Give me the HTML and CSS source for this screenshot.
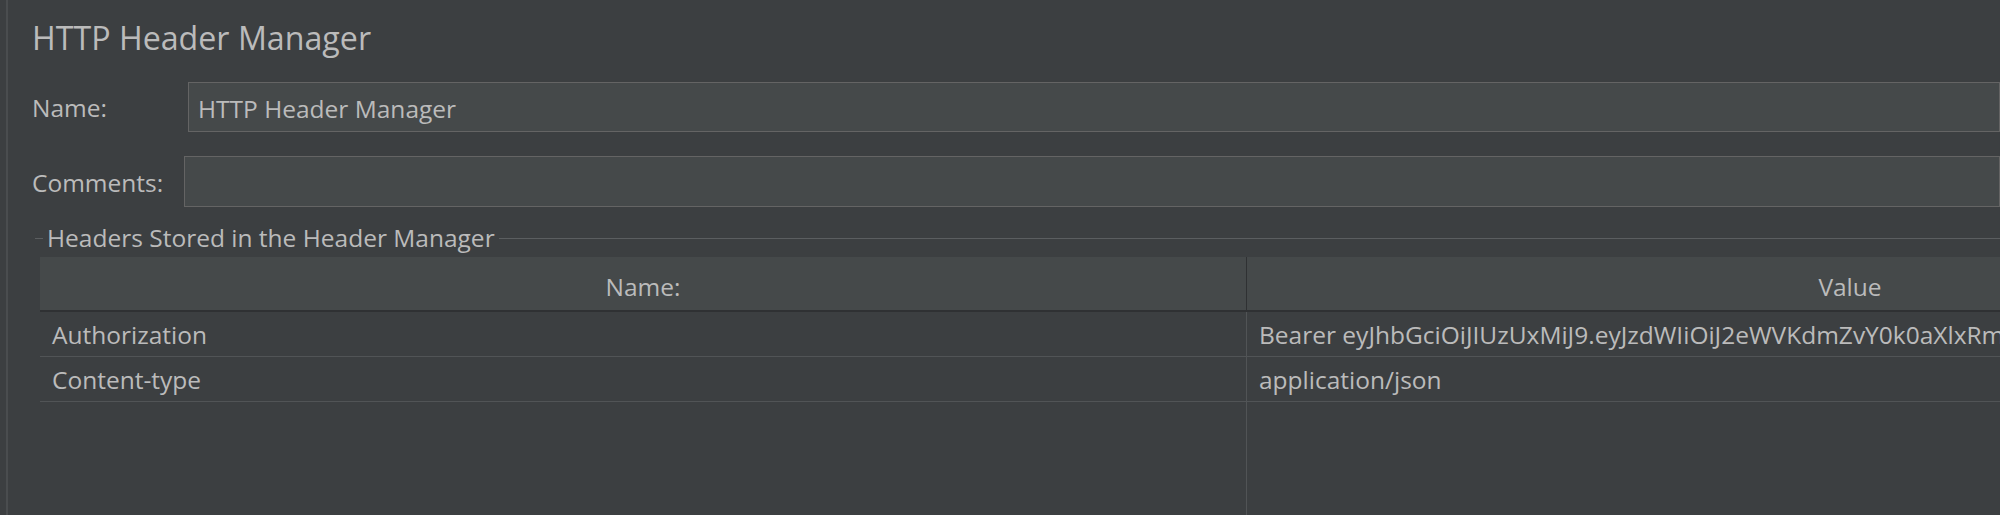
FILE: index.html
```html
<!DOCTYPE html>
<html lang="en">
<head>
<meta charset="utf-8">
<title>HTTP Header Manager</title>
<link rel="stylesheet" href="styles.css">
</head>
<body>
<div class="app">
  <div class="panel">
    <h1 class="title">HTTP Header Manager</h1>
    <div class="form-row">
      <label class="label label-name">Name:</label>
      <div class="field">HTTP Header Manager</div>
    </div>
    <div class="form-row">
      <label class="label label-comments">Comments:</label>
      <div class="field"></div>
    </div>
    <div class="group">
      <div class="legend"><span class="legend-text">Headers Stored in the Header Manager</span></div>
      <div class="table">
        <div class="row head">
          <div class="cell">Name:</div>
          <div class="cell">Value</div>
        </div>
        <div class="row">
          <div class="cell">Authorization</div>
          <div class="cell">Bearer eyJhbGciOiJIUzUxMiJ9.eyJzdWIiOiJ2eWVKdmZvY0k0aXlxRmRrUmFwTDVKd0lsRmJzM0F4ZTZ1aHBJVkpnSXNEYyIsImV4cCI6MTcwMDAwMDAwMH0</div>
        </div>
        <div class="row">
          <div class="cell">Content-type</div>
          <div class="cell">application/json</div>
        </div>
        <div class="row filler">
          <div class="cell"></div>
          <div class="cell"></div>
        </div>
      </div>
    </div>
  </div>
</div>
</body>
</html>
```

FILE: styles.css
```css
html, body {
  margin: 0;
  padding: 0;
  background: #3c3f41;
  overflow: hidden;
}

body {
  width: 2000px;
  height: 515px;
  font-family: "Open Sans", "Noto Sans", sans-serif;
  font-size: 24.5px;
  color: #bbbbbb;
}

.app {
  height: 515px;
  display: flex;
}

.panel {
  margin-left: 6px;
  border-left: 2px solid #4a4d4f;
  padding-left: 24px;
  flex: 1;
  min-width: 0;
  display: flex;
  flex-direction: column;
}

.title {
  margin: 18px 0 0 0;
  font-size: 32.2px;
  font-weight: normal;
  line-height: 40px;
  color: #bbbbbb;
}

.form-row {
  display: flex;
  align-items: center;
  margin-top: 24px;
  height: 50px;
}

.form-row + .form-row {
  height: 51px;
}

.label {
  flex: none;
  line-height: 30px;
  padding-top: 2px;
}

.label-name {
  width: 156px;
}

.label-comments {
  width: 152px;
}

.field {
  flex: 1;
  height: 100%;
  box-sizing: border-box;
  background: #45494a;
  border: 1px solid #646464;
  padding: 2px 9px 0;
  display: flex;
  align-items: center;
  white-space: nowrap;
  overflow: hidden;
}

.group {
  margin-left: 3px;
  margin-top: 16px;
  flex: 1;
  display: flex;
  flex-direction: column;
}

.legend {
  display: flex;
  align-items: center;
  line-height: 30px;
}

.legend::before {
  content: "";
  width: 8px;
  height: 1px;
  background: #5b5e60;
}

.legend::after {
  content: "";
  flex: 1;
  height: 1px;
  background: #5b5e60;
}

.legend-text {
  padding: 0 4px;
  white-space: nowrap;
}

.table {
  margin-top: 4px;
  margin-left: 5px;
  flex: 1;
  display: flex;
  flex-direction: column;
  width: 2413px;
}

.row {
  display: grid;
  grid-template-columns: 1207px 1206px;
  height: 45px;
  box-sizing: border-box;
  border-bottom: 1px solid #515456;
}

.row .cell {
  padding-left: 12px;
  display: flex;
  align-items: center;
  white-space: nowrap;
  overflow: hidden;
}

.row .cell:first-child {
  border-right: 1px solid #515456;
}

.row.head {
  height: 55px;
  background: #45494a;
  border-bottom: 2px solid #2f3133;
}

.row.head .cell {
  justify-content: center;
  padding: 6px 0 0 0;
}

.row.head .cell:first-child {
  border-right: 1px solid #2f3133;
}

.row.filler {
  flex: 1;
  border-bottom: none;
}
```
